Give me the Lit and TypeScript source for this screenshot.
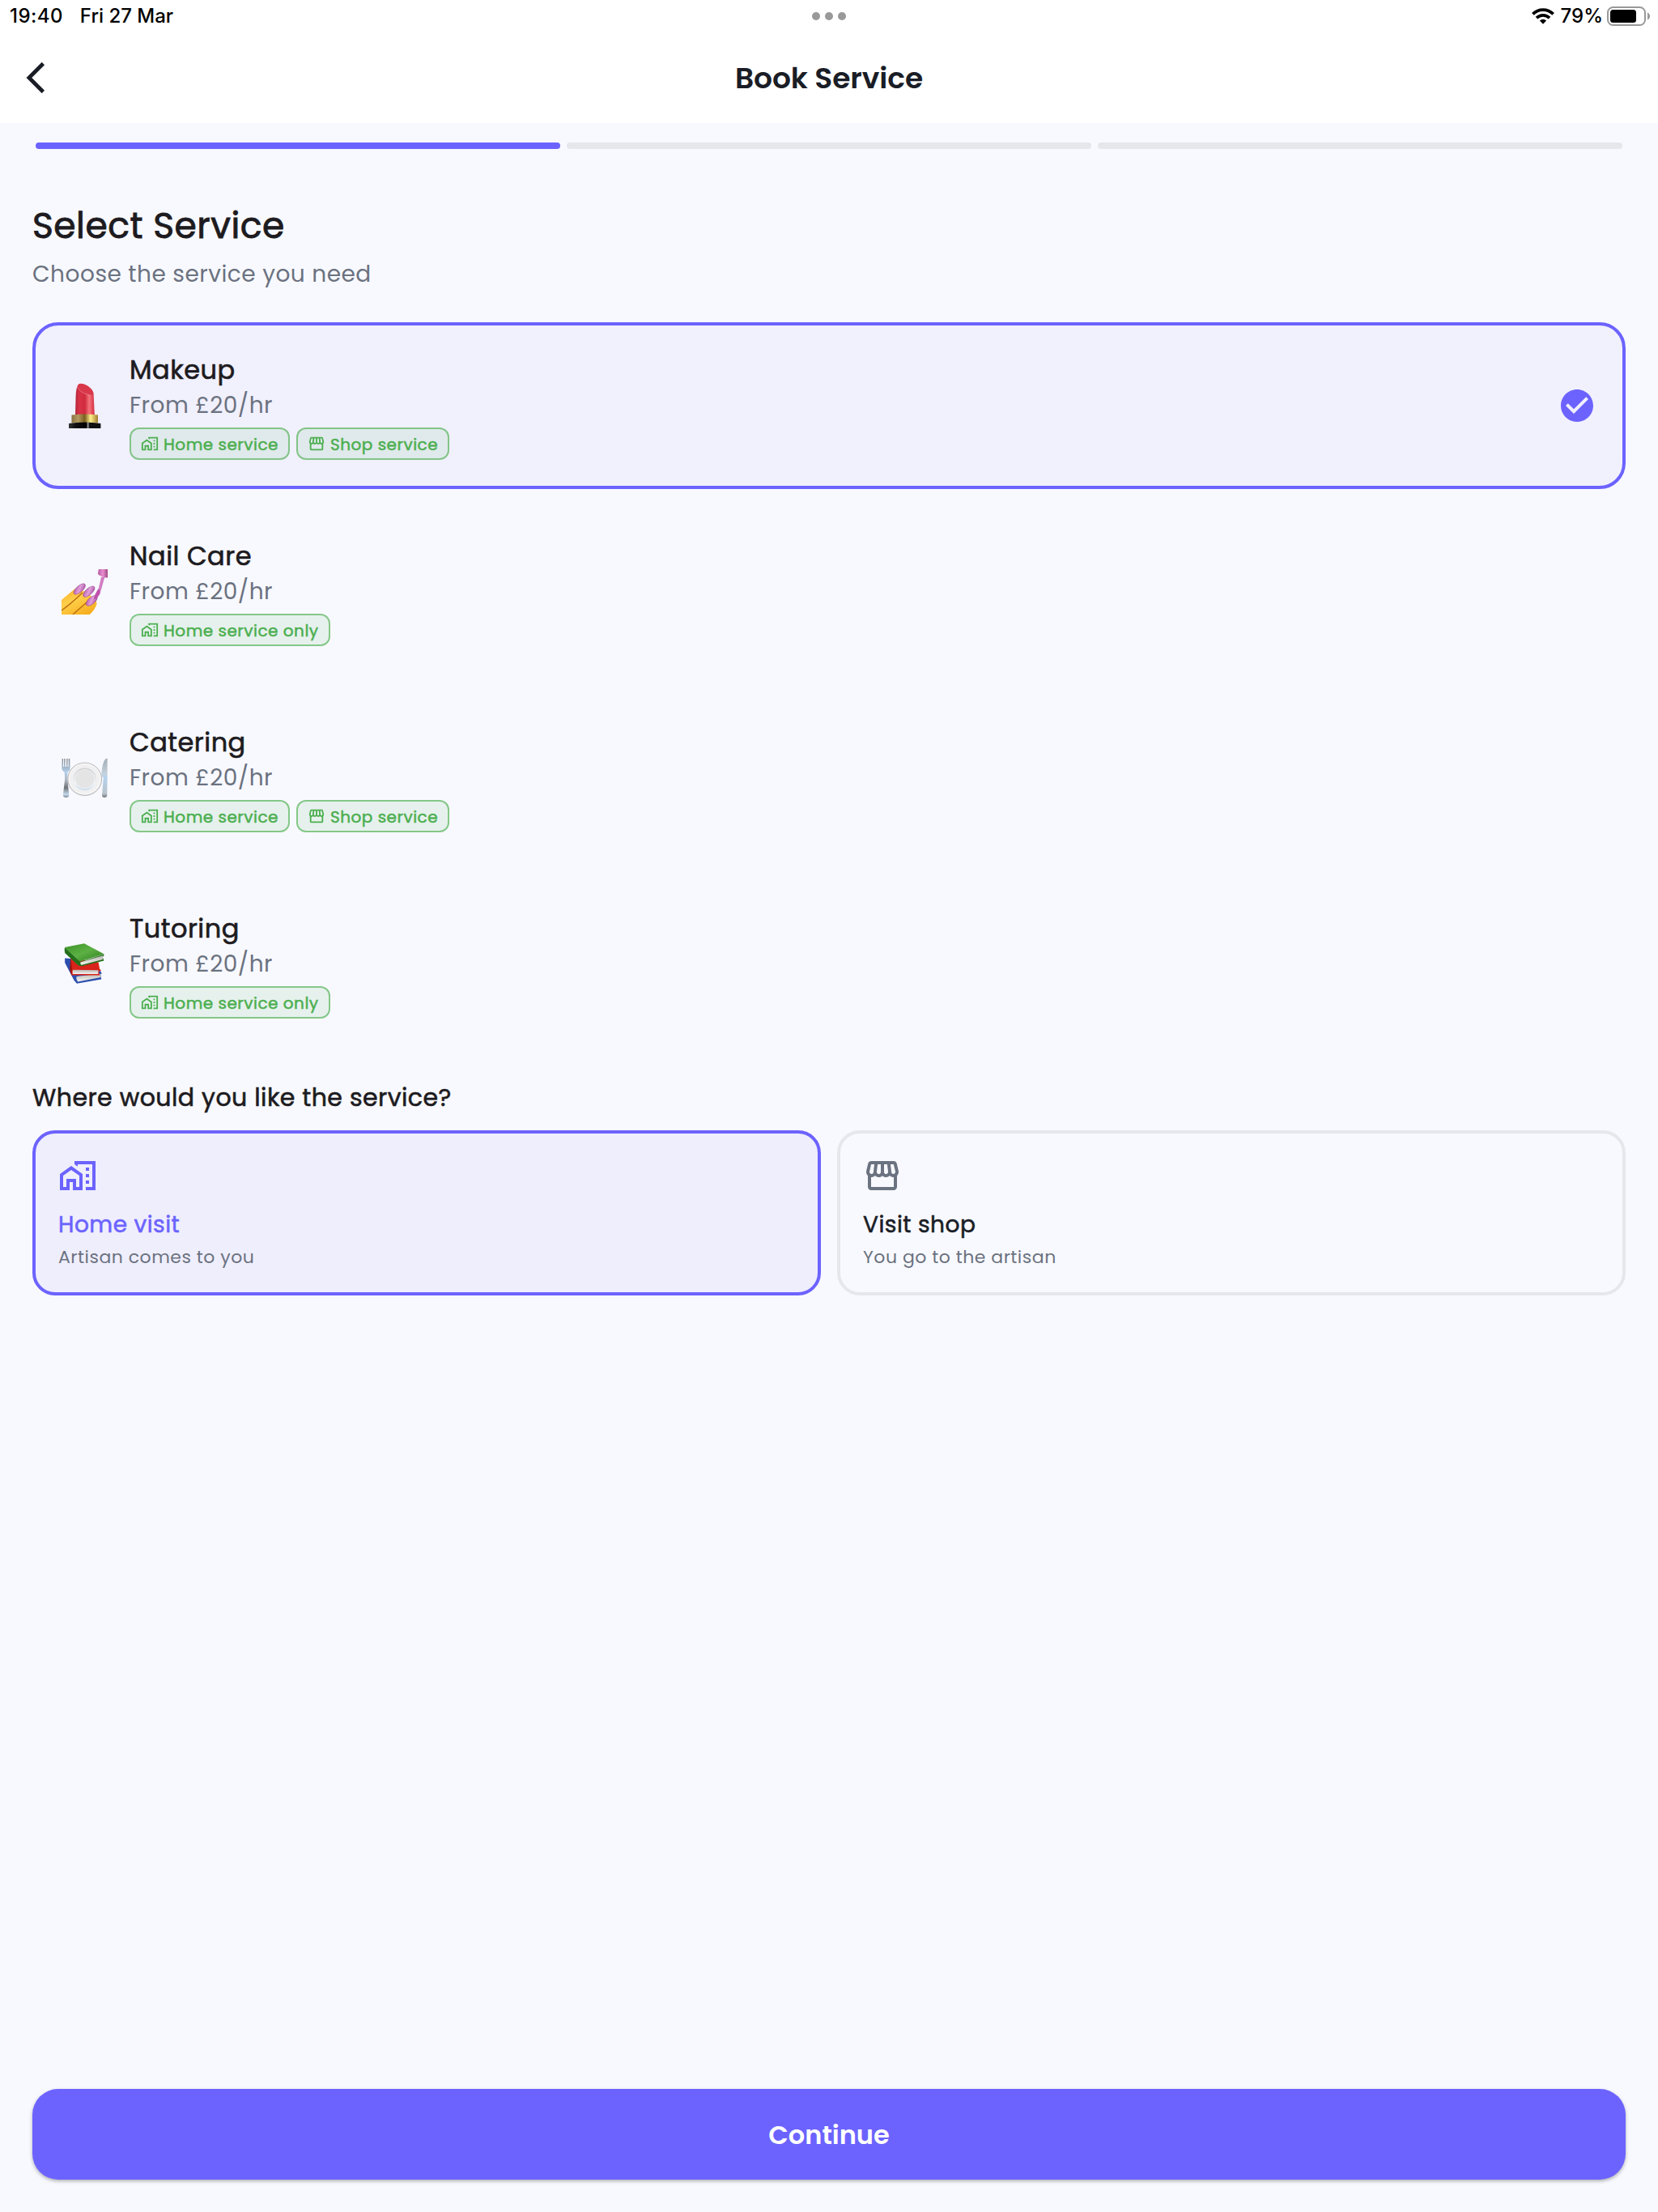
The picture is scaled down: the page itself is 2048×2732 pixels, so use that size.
import { LitElement, html, css, svg } from "lit";
import { customElement, property, state } from "lit/decorators.js";
import { classMap } from "lit/directives/class-map.js";

const homeWork = svg`<path d="M1 11v10h6v-5h2v5h6V11L8 6l-7 5zm12 8h-2v-5H5v5H3v-7l5-3.5 5 3.5v7z"/><path d="M17 7h2v2h-2zM17 11h2v2h-2zM17 15h2v2h-2z"/><path d="M10 3v1.97l2 1.43V5h9v14h-4v2h6V3z"/>`;
const storefront = svg`<path d="M21.9 8.89l-1.05-4.37c-.22-.9-1-1.52-1.91-1.52H5.05c-.9 0-1.69.63-1.9 1.52L2.1 8.89c-.24 1.02-.02 2.06.62 2.88.08.11.19.19.28.29V19c0 1.1.9 2 2 2h14c1.1 0 2-.9 2-2v-6.94c.09-.09.2-.18.28-.28.64-.82.87-1.87.62-2.89zm-2.99-3.9l1.05 4.37c.1.42.01.84-.25 1.17-.14.18-.44.47-.94.47-.61 0-1.14-.49-1.21-1.14L16.98 5l1.93-.01zM13 5h1.96l.54 4.52c.05.39-.07.78-.33 1.07-.22.26-.54.41-.95.41-.67 0-1.22-.59-1.22-1.31V5zM8.49 9.52L9.04 5H11v4.69c0 .72-.55 1.31-1.29 1.31-.34 0-.65-.15-.89-.41-.25-.29-.37-.68-.33-1.07zm-4.45-.16L5.05 5h1.97l-.58 4.86c-.08.65-.6 1.14-1.21 1.14-.49 0-.8-.29-.93-.47-.27-.32-.36-.75-.26-1.17zM5 19v-6.03c.08.01.15.03.23.03.87 0 1.66-.36 2.24-.95.6.6 1.4.95 2.31.95.87 0 1.65-.36 2.23-.93.59.57 1.39.93 2.29.93.84 0 1.64-.35 2.24-.95.58.59 1.37.95 2.24.95.08 0 .15-.02.23-.03V19H5z"/>`;
const checkCircle = svg`<path d="M12 2C6.48 2 2 6.48 2 12s4.48 10 10 10 10-4.48 10-10S17.52 2 12 2zm-2 15l-5-5 1.41-1.41L10 14.17l7.59-7.59L19 8l-9 9z"/>`;

const lipstick = svg`
  <defs>
    <linearGradient id="red"><stop offset="0" stop-color="#b0263a"/><stop offset=".2" stop-color="#d83246"/><stop offset=".5" stop-color="#cf2b3d"/><stop offset=".72" stop-color="#f4737c"/><stop offset="1" stop-color="#d52c3f"/></linearGradient>
    <linearGradient id="gold"><stop offset="0" stop-color="#8a7440"/><stop offset=".25" stop-color="#b39a62"/><stop offset=".5" stop-color="#7c5f20"/><stop offset=".72" stop-color="#fff28c"/><stop offset="1" stop-color="#a07a2c"/></linearGradient>
    <linearGradient id="base"><stop offset="0" stop-color="#333"/><stop offset=".2" stop-color="#111"/><stop offset=".55" stop-color="#000"/><stop offset=".6" stop-color="#999"/><stop offset=".65" stop-color="#111"/><stop offset="1" stop-color="#111"/></linearGradient>
  </defs>
  <path fill="url(#red)" d="M16.4 40 L17 16 Q17.6 1 22.5 .8 C29 .8 37.4 7 38.2 13 L39.4 40z"/>
  <path fill="#d9384b" d="M19 4 Q20 .8 23 .9 C29 1.2 37 7 37.8 12.5 Q37.6 15.5 33 14.6 C26 13 20 8 19 4z"/>
  <path fill="none" stroke="#ef8a92" stroke-width=".7" d="M19 5 C21 10 27 14 34 14.9"/>
  <path fill="url(#gold)" d="M12 39.5 Q27.7 37.5 43.4 39.5 V49.5 H12z"/>
  <path fill="url(#base)" d="M8.7 50 Q27.7 47 46.7 50 V56 H8.7z"/>`;

const nails = svg`
  <defs>
    <linearGradient id="skin" x1="0" y1="0" x2=".7" y2="1"><stop offset="0" stop-color="#f5a91c"/><stop offset=".45" stop-color="#ffd04a"/><stop offset="1" stop-color="#f6ae1f"/></linearGradient>
    <linearGradient id="pink" x1="0" y1="0" x2="1" y2="1"><stop offset="0" stop-color="#a94a9c"/><stop offset=".5" stop-color="#e3a0db"/><stop offset="1" stop-color="#9c3f91"/></linearGradient>
    <linearGradient id="cap"><stop offset="0" stop-color="#b55a9f"/><stop offset=".5" stop-color="#e88fd0"/><stop offset="1" stop-color="#a34a86"/></linearGradient>
  </defs>
  <path fill="url(#skin)" d="M0 38 L15 25 Q20 22 26 27 Q31 27 35 33 Q42 37 42 43 Q40 50 33.5 56 H0z"/>
  <path fill="none" stroke="#b9660b" stroke-width="1.2" d="M0 51 Q12 42 25 29 M13.5 56 L35 36.5"/>
  <g fill="url(#pink)" stroke="#8d3c86" stroke-width=".5">
    <ellipse cx="21.5" cy="24.5" rx="8.8" ry="3.9" transform="rotate(-43 21.5 24.5)"/>
    <ellipse cx="32.6" cy="27.7" rx="8.8" ry="3.9" transform="rotate(-43 32.6 27.7)"/>
    <ellipse cx="36" cy="38.8" rx="8.4" ry="4" transform="rotate(-42 36 38.8)"/>
  </g>
  <path fill="#c64fae" stroke="#9a3b8b" stroke-width=".4" d="M44 24.5 L46.2 27 Q46 33 39 37 Q39.5 31 44 24.5z"/>
  <path fill="#d77cc6" stroke="#a94e99" stroke-width=".4" d="M47.6 10 H51 L46.6 26.5 L44.2 25.5z"/>
  <path fill="url(#cap)" d="M44.2 0 H55 V10.4 Q49 11 43.3 6z"/>`;

const plate = svg`
  <defs>
    <linearGradient id="steel" x1="0" y1="0" x2="0" y2="1"><stop offset="0" stop-color="#868d92"/><stop offset=".35" stop-color="#b4d0ea"/><stop offset=".55" stop-color="#aeb6bd"/><stop offset=".75" stop-color="#6f7377"/><stop offset=".92" stop-color="#c5daf0"/><stop offset="1" stop-color="#7d868e"/></linearGradient>
    <linearGradient id="blade" x1="0" y1="0" x2="0" y2="1"><stop offset="0" stop-color="#a3adb5"/><stop offset=".4" stop-color="#c3d2dd"/><stop offset=".5" stop-color="#b4d2ee"/><stop offset=".9" stop-color="#b9c2c9"/><stop offset="1" stop-color="#6d747a"/></linearGradient>
    <linearGradient id="well" x1="0" y1="0" x2="0" y2="1"><stop offset="0" stop-color="#cfd1d3"/><stop offset=".7" stop-color="#f1f3f5"/><stop offset="1" stop-color="#c8dcf0"/></linearGradient>
  </defs>
  <circle cx="27.7" cy="29.3" r="20.2" fill="#e8e8e9" stroke="#b0b0b2" stroke-width=".9"/>
  <circle cx="27.7" cy="28.8" r="18.6" fill="#f0f0f1" stroke="#fff" stroke-width=".8"/>
  <circle cx="27.7" cy="29.3" r="13.8" fill="url(#well)"/>
  <circle cx="27.7" cy="29" r="11.6" fill="#e4e4e4" stroke="#f7f7f7" stroke-width=".6"/>
  <path fill="url(#steel)" d="M.6 4 H1.9 V14 H3 V4 H4.4 V14 H5.9 V4 H7.3 V14 H8.4 V4 H9.9 L10.2 16 Q10 19 7.2 20.5 L7 29 L9 49 Q8.8 52 5.3 52 Q1.8 52 1.8 49 L4 29 L3.5 20.5 Q.5 19 .4 16z"/>
  <path fill="url(#blade)" d="M54.6 3.5 V27 L54.3 50 Q53.8 52 51.3 52 Q48.4 52 48.2 49.5 L50 27 Q47.5 27 47.7 24 C48 14 50 4 54.6 3.5z"/>`;

const books = svg`
  <defs>
    <linearGradient id="green" x1="0" y1="0" x2="1" y2="1"><stop offset="0" stop-color="#3c9427"/><stop offset=".5" stop-color="#5cb044"/><stop offset="1" stop-color="#2d7d1c"/></linearGradient>
    <linearGradient id="page" x1="0" y1="0" x2="0" y2="1"><stop offset="0" stop-color="#b9b6b2"/><stop offset="1" stop-color="#f6f4f2"/></linearGradient>
  </defs>
  <path fill="#2b4fae" d="M4 20.5 L11 21 L15 40 L46 36 L48 39 L46.5 40.5 L47.5 46.5 L18.3 51.8 Q15 49 13 44 L4 26z"/>
  <path fill="url(#page)" d="M18 43 L46 39.5 L47 44 L19.5 49.5 Q17 46 18 43z"/>
  <path fill="#d9241b" d="M11 20 L44 25.5 L45.5 34 L47.5 35.5 L44.8 36.5 V40 L46 41.5 H12 Q9 34 11 32z"/>
  <path fill="#9c150f" d="M11 20 L12.5 34 L12 41.5 Q9.2 35 10 31z"/>
  <path fill="url(#page)" d="M13.6 34.8 L44 35.3 L43.6 40 H13.4 Q12.4 37 13.6 34.8z"/>
  <path fill="#22701a" d="M4 7 L22.5 25 L50.6 15.5 L50.6 17 L49 19 L50.6 23.5 L24 30.3 Q21 30.5 19 28.5 L4 14 Q3 10 4 7z"/>
  <path fill="url(#page)" d="M23 25.2 L49.4 17.2 L49 22 L24 28.8 Q21.5 27.5 23 25.2z"/>
  <path fill="url(#green)" d="M4 7 L27 2.3 L50.6 15.3 L23 24.2 Q21.5 24.5 20.6 23.6z"/>`;

type Place = "home" | "shop";
interface Tag { icon: unknown; label: string }
interface Service { name: string; price: string; art: unknown; tags: Tag[] }

const homeTag = { icon: homeWork, label: "Home service" };
const homeOnlyTag = { icon: homeWork, label: "Home service only" };
const shopTag = { icon: storefront, label: "Shop service" };

const services: Service[] = [
  { name: "Makeup", price: "From £20/hr", art: lipstick, tags: [homeTag, shopTag] },
  { name: "Nail Care", price: "From £20/hr", art: nails, tags: [homeOnlyTag] },
  { name: "Catering", price: "From £20/hr", art: plate, tags: [homeTag, shopTag] },
  { name: "Tutoring", price: "From £20/hr", art: books, tags: [homeOnlyTag] },
];

@customElement("status-bar")
export class StatusBar extends LitElement {
  static styles = css`
    :host { display: block; }
    .bar {
      display: grid; grid-template-columns: 1fr auto 1fr; align-items: center;
      height: 40px; padding: 0 12px; color: #000;
      font: 500 24px/38px Inter, sans-serif; letter-spacing: 0;
    }
    .left { display: flex; gap: 21px; }
    .time { letter-spacing: 0.45px; }
    .dots { display: flex; gap: 6px; }
    .dot { width: 10px; height: 10px; border-radius: 50%; background: #999; }
    .right { display: flex; justify-content: flex-end; align-items: center; margin-right: -2px; }
    .wifi { width: 28px; height: 20px; margin-right: 8px; }
    .percent { margin-right: 5px; }
    .battery { width: 53px; height: 24px; }
    svg { display: block; }
  `;
  render() {
    return html`<div class="bar">
      <div class="left"><span class="time">19:40</span><span>Fri 27 Mar</span></div>
      <div class="dots"><i class="dot"></i><i class="dot"></i><i class="dot"></i></div>
      <div class="right">
        <svg class="wifi" viewBox="0 0 28 20" fill="none" stroke="#000" stroke-width="3.8">
          <path d="M1.4 7.3 C8.4 .3 19.6 .3 26.6 7.3"/>
          <path d="M6 12.2 C10.6 7.8 17.4 7.8 22 12.2"/>
          <path d="M9.9 15.6 Q14 12 18.1 15.6 L14 19.8z" fill="#000" stroke="none"/>
        </svg>
        <span class="percent">79%</span>
        <svg class="battery" viewBox="0 0 53 24">
          <rect x="1" y="1" width="46" height="22" rx="6.5" fill="none" stroke="#999" stroke-width="2"/>
          <rect x="4" y="4" width="32" height="16" rx="3.5" fill="#000"/>
          <path d="M50 7.5 Q53 9 53 12 Q53 15 50 16.5z" fill="#999"/>
        </svg>
      </div>
    </div>`;
  }
}

@customElement("service-card")
export class ServiceCard extends LitElement {
  @property({ attribute: false }) service!: Service;
  @property({ type: Boolean }) selected = false;
  static styles = css`
    :host { display: block; }
    .card {
      display: flex; align-items: center; box-sizing: border-box; height: 206px;
      padding: 0 32px; border: 4px solid transparent; border-radius: 32px;
    }
    .card.selected { border-color: #6c63ff; background: #f1f0fd; }
    .art { display: block; width: 57px; height: 56px; margin-right: 27px; overflow: hidden; }
    .info { flex: 1; }
    .name { font-size: 32px; line-height: 46px; color: #1d1b20; -webkit-text-stroke: 0.02em currentColor; }
    .price { font-size: 28px; line-height: 42px; color: #6b7280; }
    .tags { display: flex; gap: 8px; margin-top: 6px; }
    .tag {
      display: flex; align-items: center; gap: 6px; box-sizing: border-box; height: 40px;
      padding: 0 12px; border: 2px solid rgba(76, 175, 80, 0.68); border-radius: 12px;
      background: rgba(76, 175, 80, 0.1); background-clip: padding-box;
      color: #4caf50; font-size: 20px; line-height: 30px; white-space: nowrap;
    }
    .label { padding-top: 2px; -webkit-text-stroke: 0.025em currentColor; }
    .tag svg { width: 22px; height: 22px; fill: currentColor; }
    .check { display: block; width: 48px; height: 48px; fill: #6c63ff; }
  `;
  render() {
    const s = this.service;
    return html`<div class=${classMap({ card: true, selected: this.selected })}>
      <svg class="art" viewBox="0 0 55 56" preserveAspectRatio="none">${s.art}</svg>
      <div class="info">
        <div class="name">${s.name}</div>
        <div class="price">${s.price}</div>
        <div class="tags">${s.tags.map((t) => html`<div class="tag">
          <svg viewBox="0 0 24 24">${t.icon}</svg><span class="label">${t.label}</span>
        </div>`)}</div>
      </div>
      ${this.selected ? html`<svg class="check" viewBox="0 0 24 24">${checkCircle}</svg>` : null}
    </div>`;
  }
}

@customElement("place-option")
export class PlaceOption extends LitElement {
  @property({ attribute: false }) icon: unknown;
  @property() heading = "";
  @property() detail = "";
  @property({ type: Boolean }) selected = false;
  static styles = css`
    :host { display: block; }
    .option {
      box-sizing: border-box; height: 204px; padding: 28px; border: 4px solid #e5e7eb;
      border-radius: 28px; color: #6b7280;
    }
    .option.selected { border-color: #6c63ff; background: #efeefd; }
    .icon { display: block; width: 48px; height: 48px; fill: currentColor; }
    .heading {
      margin-top: 16px; font-size: 28px; line-height: 41px; color: #1a1d26;
      -webkit-text-stroke: 0.02em currentColor;
    }
    .detail { margin-top: 3px; font-size: 22px; line-height: 33px; }
    .selected .icon, .selected .heading { color: #6c63ff; }
  `;
  render() {
    return html`<div class=${classMap({ option: true, selected: this.selected })}>
      <svg class="icon" viewBox="0 0 24 24">${this.icon}</svg>
      <div class="heading">${this.heading}</div>
      <div class="detail">${this.detail}</div>
    </div>`;
  }
}

@customElement("app-root")
export class AppRoot extends LitElement {
  @state() private service = 0;
  @state() private place: Place = "home";
  static styles = css`
    :host { display: block; }
    .page {
      display: flex; flex-direction: column; box-sizing: border-box; width: 100%; height: 2732px;
      background: #f8f9ff; color: #1d1b20; font-family: Poppins, Inter, sans-serif; font-weight: 400;
      letter-spacing: 0.5px;
    }
    .top { background: #fff; }
    .header { display: grid; grid-template-columns: 1fr auto 1fr; align-items: center; height: 112px; padding: 0 21px; }
    .back { width: 46px; height: 46px; fill: #1a1d26; }
    .title { margin: 0; padding-top: 2px; font-size: 36px; line-height: 54px; font-weight: 600; letter-spacing: -0.05px; color: #1a1d26; }
    .steps { display: grid; grid-template-columns: repeat(3, 1fr); gap: 8px; padding: 24px 44px 0; }
    .step { height: 8px; border-radius: 4px; background: #e5e7eb; }
    .step.done { background: #6c63ff; }
    .content { flex: 1; padding: 62px 40px 0; }
    .h1, .h2 { font-weight: 400; -webkit-text-stroke: 0.02em currentColor; }
    .h1 { margin: 0; font-size: 44px; line-height: 66px; }
    .lead { margin: 6px 0 38px; font-size: 28px; line-height: 42px; color: #6b7280; }
    .list { display: grid; gap: 24px; }
    .h2 { margin: 40px 0 18px; font-size: 30px; line-height: 44px; letter-spacing: 0.46px; }
    .options { display: grid; grid-template-columns: 1fr 1fr; gap: 20px; }
    .footer { padding: 0 40px 40px; }
    .continue {
      display: block; width: 100%; height: 112px; padding: 1px 0 0; border: 0; border-radius: 32px;
      background: #6c63ff; color: #fff; font: 600 32px/48px Poppins, Inter, sans-serif;
      box-shadow: 0 2px 4px rgba(0, 0, 0, 0.3);
    }
  `;
  render() {
    return html`<div class="page">
      <div class="top">
        <status-bar></status-bar>
        <div class="header">
          <svg class="back" viewBox="0 0 24 24"><path d="M17.77 3.77L16 2 6 12l10 10 1.77-1.77L9.54 12z"/></svg>
          <h1 class="title">Book Service</h1>
        </div>
      </div>
      <div class="steps"><div class="step done"></div><div class="step"></div><div class="step"></div></div>
      <div class="content">
        <h2 class="h1">Select Service</h2>
        <p class="lead">Choose the service you need</p>
        <div class="list">
          ${services.map((s, i) => html`<service-card .service=${s} ?selected=${i === this.service}
            @click=${() => (this.service = i)}></service-card>`)}
        </div>
        <h3 class="h2">Where would you like the service?</h3>
        <div class="options">
          <place-option .icon=${homeWork} heading="Home visit" detail="Artisan comes to you"
            ?selected=${this.place === "home"} @click=${() => (this.place = "home")}></place-option>
          <place-option .icon=${storefront} heading="Visit shop" detail="You go to the artisan"
            ?selected=${this.place === "shop"} @click=${() => (this.place = "shop")}></place-option>
        </div>
      </div>
      <div class="footer"><button class="continue">Continue</button></div>
    </div>`;
  }
}
